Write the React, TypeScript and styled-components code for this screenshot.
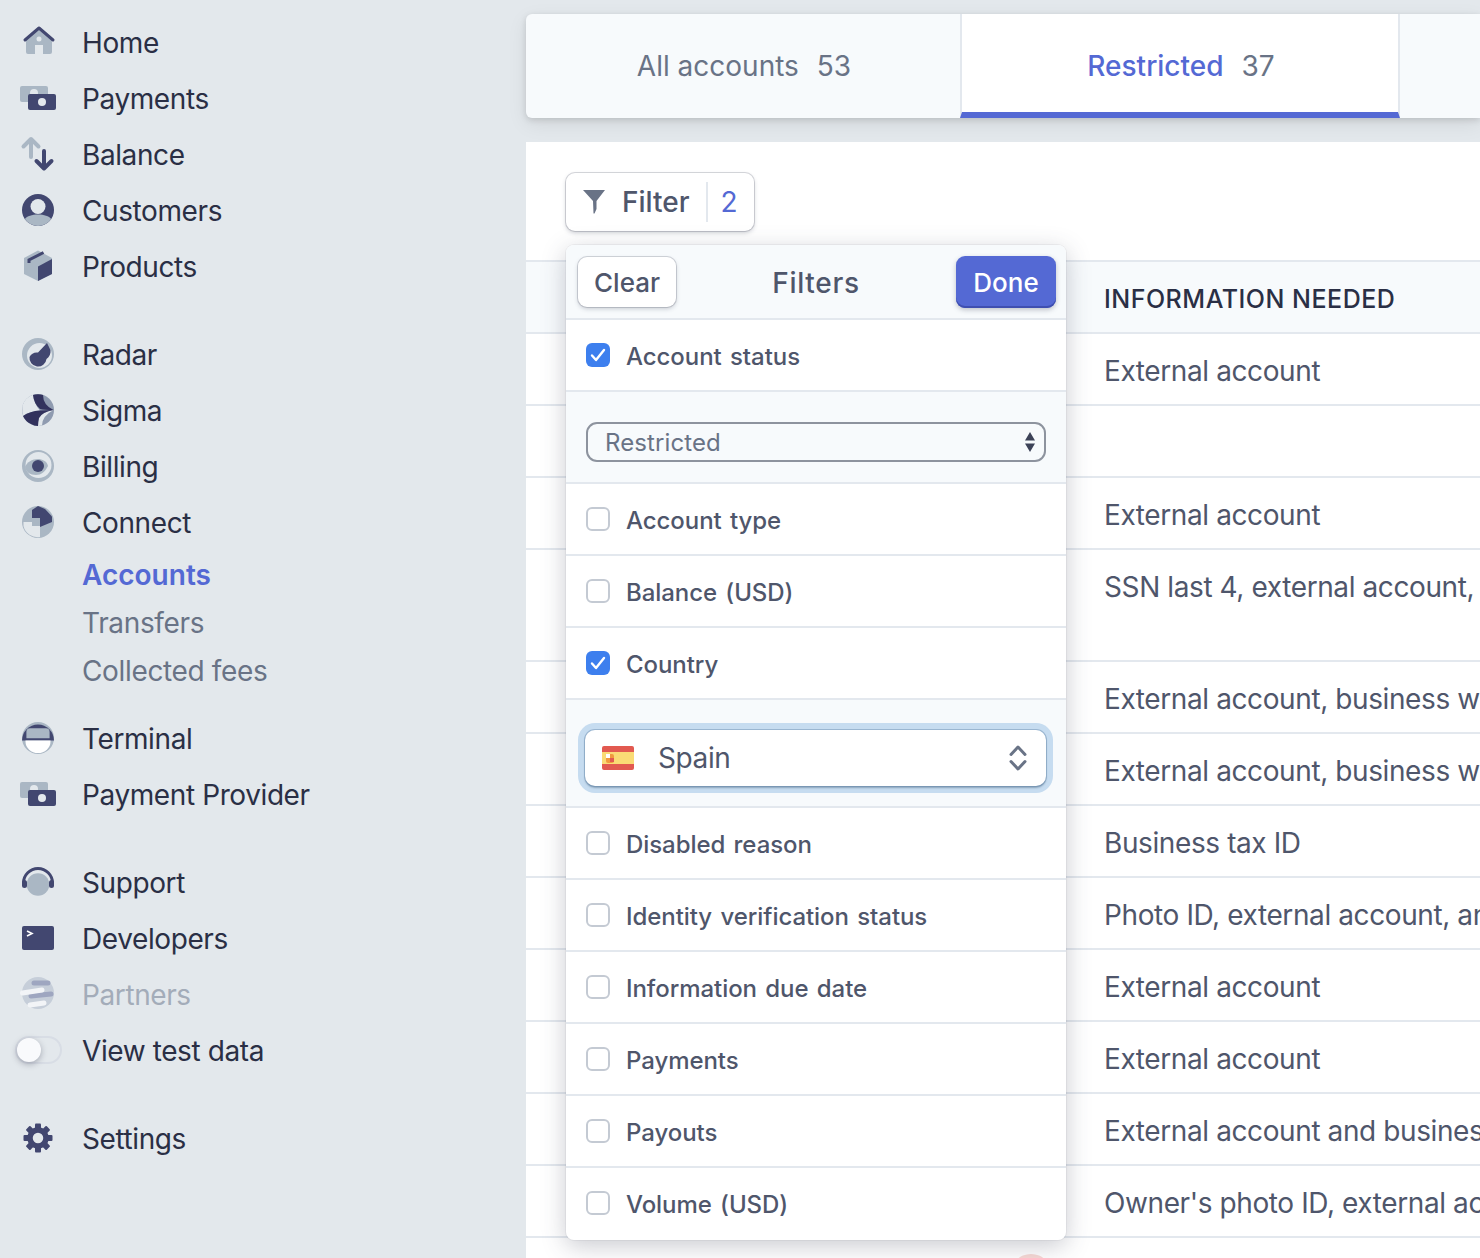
import * as React from 'react';
import styled, { createGlobalStyle } from 'styled-components';

const DARK = '#424770';
const LIGHT = '#aab7c4';
const BG = '#e3e8ec';
const ACCENT = '#5469d4';

const GlobalResetStyles = createGlobalStyle`
  * {
    margin: 0;
    padding: 0;
    box-sizing: border-box;
  }
  html, body {
    height: 100%;
    overflow: hidden;
    background: ${BG};
    font-family: Inter, "Liberation Sans", sans-serif;
    color: #2a2f45;
  }
`;

/* ---- sidebar icons, all on a 36x36 box ---- */

const Ico = ({ children }: { children: React.ReactNode }) => (
  <svg width="36" height="36" viewBox="0 0 36 36">{children}</svg>
);

const HomeIcon = () => (
  <Ico>
    <path d="M6 15 19 5l13 10v13a2 2 0 0 1-2 2h-7v-9h-8v9H8a2 2 0 0 1-2-2z" fill={LIGHT} />
    <circle cx="19" cy="15" r="2.5" fill={BG} />
    <path d="M5 16 19 4l14 12" fill="none" stroke={DARK} strokeWidth="3" strokeLinecap="round" strokeLinejoin="round" />
  </Ico>
);

const PaymentsIcon = () => (
  <Ico>
    <rect x="0" y="6" width="28" height="16" rx="2" fill={LIGHT} />
    <circle cx="14" cy="13" r="4" fill={BG} />
    <rect x="8" y="14" width="28" height="16" rx="2" fill={DARK} />
    <circle cx="22" cy="22" r="4" fill={BG} />
  </Ico>
);

const BalanceIcon = () => (
  <Ico>
    <path d="M11 21V3.5M3.5 10.5 11 3l7.5 7.5" fill="none" stroke={LIGHT} strokeWidth="4" strokeLinecap="round" strokeLinejoin="round" />
    <path d="M24 15v17M16.5 25l7.5 7.5 7.5-7.5" fill="none" stroke={DARK} strokeWidth="4" strokeLinecap="round" strokeLinejoin="round" />
  </Ico>
);

const CustomersIcon = () => (
  <Ico>
    <circle cx="18" cy="18" r="16" fill={DARK} />
    <path d="M4.8 27C7 24 12 22.5 18 22.5S29 24 31.2 27A16 16 0 0 1 4.8 27z" fill={LIGHT} />
    <circle cx="18" cy="14.5" r="7.5" fill={BG} />
  </Ico>
);

const ProductsIcon = () => (
  <Ico>
    <path d="M18 2.5 32 10v16l-14 7-14-7V10z" fill={LIGHT} />
    <path d="M18 18.5 32 11v15l-14 7z" fill={DARK} />
    <path d="M9 15v-3l14.5-7.5" fill="none" stroke={DARK} strokeWidth="3" />
  </Ico>
);

const RadarIcon = () => (
  <Ico>
    <circle cx="18" cy="18" r="16" fill={LIGHT} />
    <circle cx="19.5" cy="19.5" r="12.5" fill={BG} />
    <path d="M9.5 21a8.5 8.5 0 0 0 17 2c3-2 4.5-6 4-9l-3.500-7-9 9.500a8.500 8.500 0 0 0-8.500 4.500z" fill={DARK} />
  </Ico>
);

const SigmaIcon = () => (
  <Ico>
    <circle cx="18" cy="18" r="16" fill="#8f9bb0" />
    <path d="M13 2.800Q5 5.500 2.300 14 2 20 3 24 10 19 20 18.500 14 12 13 2.800z" fill={BG} />
    <path d="M33.500 18Q22 20 19 26 18 30 18 34l4-.5Q22 24 33.500 18z" fill={BG} />
    <path d="M13 3Q18 1.500 23 3 23 13 33.500 18 24 18 20 17 14 12 13 3z" fill="#32325d" />
    <path d="M3 24Q10 19 20 18.500L33.500 18Q22 20 19 26 18 30 18 34 14 34 11 32 5 29 3 24z" fill="#32325d" />
  </Ico>
);

const BillingIcon = () => (
  <Ico>
    <circle cx="18" cy="18" r="16" fill={LIGHT} />
    <circle cx="18.500" cy="17" r="13" fill={BG} />
    <path d="M5 19c2-5 7-8 13-8 4 0 9 2 10 7-3 6-7 9-12 9-6 0-10-3-11-8z" fill={LIGHT} />
    <circle cx="18" cy="18" r="6" fill={DARK} />
  </Ico>
);

const ConnectIcon = () => (
  <Ico>
    <circle cx="18" cy="18" r="16" fill={LIGHT} />
    <path d="M12 18V6l6-4 7 3 7 7.500V18l-12 5z" fill={DARK} />
    <rect x="12" y="14" width="8" height="8" fill={LIGHT} />
    <path d="M3.500 22a14.500 14.500 0 0 0 16.500 11V22H12v-4H3.500z" fill={BG} />
  </Ico>
);

const TerminalIcon = () => (
  <Ico>
    <circle cx="18" cy="18" r="16" fill={LIGHT} />
    <path d="M2 20.500a16 16 0 0 1 32 0z" fill={DARK} />
    <path d="M6.400 18.300V12q0-3.700 3.600-3.700h16q3.600 0 3.600 3.700v6.300z" fill={LIGHT} />
    <path d="M5.500 20.500h25v1a12.500 11.500 0 0 1-25 0z" fill="#fff" />
  </Ico>
);

const SupportIcon = () => (
  <Ico>
    <circle cx="18" cy="20.500" r="11.300" fill={LIGHT} />
    <path d="M3.500 19a14.500 14.500 0 0 1 29 0" fill="none" stroke={DARK} strokeWidth="3" />
    <rect x="2" y="16" width="5" height="8" rx="2.500" fill={DARK} />
    <rect x="29" y="16" width="5" height="8" rx="2.500" fill={DARK} />
  </Ico>
);

const DevelopersIcon = () => (
  <Ico>
    <rect x="2" y="6" width="32" height="24" rx="2" fill={DARK} />
    <path d="m7 11 5 2.500L7 16" fill="none" stroke="#fff" strokeWidth="1.600" />
  </Ico>
);

const PartnersIcon = () => (
  <Ico>
    <circle cx="18" cy="17" r="16" fill="#c6ced9" />
    <path d="M14 7h14M11 20l20-2" stroke="#9ea6c0" strokeWidth="5" strokeLinecap="round" fill="none" />
    <path d="M2.500 17 22 14M10 29l14-2" stroke="#f2f4f7" strokeWidth="5" strokeLinecap="round" fill="none" />
  </Ico>
);

const SettingsIcon = () => (
  <Ico>
    {[0, 45, 90, 135, 180, 225, 270, 315].map((deg) => (
      <rect key={deg} x="15" y="3.500" width="6" height="6" rx="1" fill={DARK} transform={`rotate(${deg} 18 18)`} />
    ))}
    <circle cx="18" cy="18" r="8" fill="none" stroke={DARK} strokeWidth="5.500" />
  </Ico>
);

/* ---- sidebar ---- */

const Sidebar = styled.nav`
  width: 526px;
  flex: none;
  padding: 14px 0 0 20px;
`;

const NavGroup = styled.div`
  margin-bottom: 32px;
`;

const NavRow = styled.div`
  height: 56px;
  display: flex;
  align-items: center;
  gap: 26px;
`;

const IconSlot = styled.span`
  width: 36px;
  height: 36px;
  flex: none;
  display: flex;
  align-items: center;
  justify-content: center;
`;

const NavLabel = styled.span<{ $muted?: boolean }>`
  padding-top: 1px;
  font-size: 28px;
  letter-spacing: -0.4px;
  color: ${(p) => (p.$muted ? '#a3acb9' : '#2a2f45')};
`;

const SubNav = styled.div`
  padding: 0 0 16px 62px;
`;

const SubLink = styled.div<{ $active?: boolean }>`
  height: 48px;
  display: flex;
  align-items: center;
  padding-top: 1px;
  font-size: 28px;
  letter-spacing: ${(p) => (p.$active ? 0 : -0.35)}px;
  font-weight: ${(p) => (p.$active ? 600 : 400)};
  color: ${(p) => (p.$active ? ACCENT : '#697386')};
`;

const Toggle = styled.span`
  width: 47px;
  height: 28px;
  flex: none;
  border: 2px solid #d8dde5;
  border-radius: 14px;
  position: relative;
`;

const ToggleKnob = styled.span`
  position: absolute;
  left: 0;
  top: 0;
  width: 24px;
  height: 24px;
  border-radius: 50%;
  background: #f9fafc;
  box-shadow: 0 2px 6px rgba(42, 47, 69, 0.35);
`;

const navGroups = [
  [
    { label: 'Home', icon: <HomeIcon /> },
    { label: 'Payments', icon: <PaymentsIcon /> },
    { label: 'Balance', icon: <BalanceIcon /> },
    { label: 'Customers', icon: <CustomersIcon /> },
    { label: 'Products', icon: <ProductsIcon /> },
  ],
];

/* ---- main area ---- */

const Page = styled.div`
  display: flex;
  height: 1258px;
  overflow: hidden;
`;

const Main = styled.main`
  flex: 1;
  min-width: 0;
  padding-top: 14px;
`;

const Tabs = styled.div`
  position: relative;
  display: flex;
  height: 104px;
  background: #f7fafc;
  border-radius: 6px 0 0 6px;
  box-shadow: 0 2px 6px rgba(0, 0, 0, 0.13), 0 6px 20px rgba(0, 0, 0, 0.08);
`;

const Tab = styled.div<{ $active?: boolean; $width: number }>`
  width: ${(p) => p.$width}px;
  flex: none;
  display: flex;
  align-items: center;
  justify-content: center;
  gap: 18px;
  padding: ${(p) => (p.$active ? 6 : 0)}px 0 0 2px;
  font-size: 28px;
  color: #697386;
  background: ${(p) => (p.$active ? '#fff' : 'transparent')};
  border-left: ${(p) => (p.$active ? '2px solid #e3e8ee' : 'none')};
  border-right: ${(p) => (p.$active ? '2px solid #e3e8ee' : 'none')};
  border-bottom: ${(p) => (p.$active ? `6px solid ${ACCENT}` : 'none')};
`;

const TabLabel = styled.span<{ $active?: boolean }>`
  color: ${(p) => (p.$active ? ACCENT : '#697386')};
  font-weight: ${(p) => (p.$active ? 500 : 400)};
`;

const Card = styled.section`
  position: relative;
  margin-top: 24px;
  height: 1200px;
  background: #fff;
  padding-top: 31px;
`;

const FilterButton = styled.div`
  margin-left: 40px;
  width: 188px;
  height: 58px;
  display: flex;
  align-items: center;
  padding-left: 17px;
  background: #fff;
  border-radius: 9px;
  box-shadow: 0 0 0 1px rgba(60, 66, 87, 0.2), 0 2px 4px rgba(60, 66, 87, 0.25);
  font-size: 28px;
  font-weight: 500;
  color: #4f566b;
`;

const FilterText = styled.span`
  margin-left: 17px;
`;

const FilterDivider = styled.span`
  width: 2px;
  height: 40px;
  margin: 0 13px 0 16px;
  background: #e3e8ee;
`;

const FilterCount = styled.span`
  color: ${ACCENT};
  font-weight: 400;
`;

const Table = styled.div`
  margin-top: 29px;
`;

const HeadRow = styled.div`
  height: 74px;
  padding: 4px 0 0 578px;
  display: flex;
  align-items: center;
  background: #f7fafc;
  border-top: 2px solid #e3e8ee;
  border-bottom: 2px solid #e3e8ee;
  font-size: 25px;
  font-weight: 500;
  letter-spacing: 0.5px;
  color: #2a2f45;
  white-space: nowrap;
`;

const BodyRow = styled.div<{ $tall?: boolean }>`
  height: ${(p) => (p.$tall ? 112 : 72)}px;
  padding: 20px 0 0 578px;
  border-bottom: 2px solid #e3e8ee;
  font-size: 28px;
  letter-spacing: -0.4px;
  line-height: 34px;
  color: #4f566b;
  white-space: nowrap;
`;

const LastRow = styled.div`
  padding: 16px 0 0 484px;
`;

const StatusDot = styled.div`
  width: 42px;
  height: 42px;
  border-radius: 50%;
  background: #f8d9d5;
`;

const tableRows = [
  { text: 'External account' },
  { text: '' },
  { text: 'External account' },
  { text: 'SSN last 4, external account, business', tall: true },
  { text: 'External account, business website' },
  { text: 'External account, business website' },
  { text: 'Business tax ID' },
  { text: 'Photo ID, external account, and more' },
  { text: 'External account' },
  { text: 'External account' },
  { text: 'External account and business details' },
  { text: "Owner's photo ID, external account" },
];

/* ---- filter popover ---- */

const Popover = styled.div`
  position: absolute;
  left: 40px;
  top: 103px;
  width: 500px;
  background: #fff;
  border-radius: 8px;
  overflow: hidden;
  box-shadow: 0 0 0 1px rgba(60, 66, 87, 0.06), 0 6px 24px rgba(60, 66, 87, 0.28);
`;

const PopoverHead = styled.div`
  height: 75px;
  display: flex;
  align-items: center;
  justify-content: space-between;
  padding: 0 10px 0 12px;
  background: #f7fafc;
  border-bottom: 2px solid #e3e8ee;
`;

const PopoverTitle = styled.span`
  padding-top: 3px;
  font-size: 28px;
  font-weight: 500;
  letter-spacing: 0.7px;
  color: #4f566b;
`;

const HeadButton = styled.div<{ $primary?: boolean }>`
  width: ${(p) => (p.$primary ? 100 : 98)}px;
  height: ${(p) => (p.$primary ? 52 : 50)}px;
  display: flex;
  align-items: center;
  justify-content: center;
  padding-top: 2px;
  border-radius: 9px;
  font-size: 26px;
  font-weight: 500;
  color: ${(p) => (p.$primary ? '#fff' : '#4f566b')};
  background: ${(p) => (p.$primary ? ACCENT : '#fff')};
  box-shadow: ${(p) =>
    p.$primary
      ? 'inset 0 -2px 0 #3f4fb0, 0 2px 5px rgba(60, 66, 87, 0.3)'
      : '0 0 0 1px rgba(60, 66, 87, 0.2), 0 2px 4px rgba(60, 66, 87, 0.25)'};
`;

const FilterRow = styled.div`
  height: 72px;
  display: flex;
  align-items: center;
  gap: 16px;
  padding-left: 20px;
  border-bottom: 2px solid #e3e8ee;
  font-size: 24px;
  font-weight: 500;
  letter-spacing: -0.06px;
  word-spacing: 2px;
  color: #4f566b;

  &:last-child {
    border-bottom-color: transparent;
  }
`;

const FilterName = styled.span`
  padding-top: 2px;
`;

const Checkbox = styled.span<{ $checked?: boolean }>`
  width: 24px;
  height: 24px;
  flex: none;
  display: flex;
  align-items: center;
  justify-content: center;
  border-radius: 6px;
  background: ${(p) => (p.$checked ? '#3d7fee' : '#fff')};
  border: ${(p) => (p.$checked ? 'none' : '2px solid #c4cad3')};
`;

const SubPanel = styled.div<{ $height: number }>`
  height: ${(p) => p.$height}px;
  display: flex;
  align-items: center;
  background: #f7fafc;
  border-bottom: 2px solid #e3e8ee;
  padding: 10px 20px 0;
`;

const NativeSelect = styled.div`
  width: 460px;
  height: 40px;
  display: flex;
  align-items: center;
  justify-content: space-between;
  padding: 0 8px 0 17px;
  border: 2px solid #8d939e;
  border-radius: 11px;
  font-size: 24px;
  letter-spacing: 0.1px;
  color: #697386;
`;

const CountrySelect = styled.div`
  width: 462px;
  height: 56px;
  margin-left: -1px;
  display: flex;
  align-items: center;
  justify-content: space-between;
  padding: 0 19px 0 17px;
  background: #fff;
  border-radius: 10px;
  box-shadow: 0 0 0 1px rgba(100, 135, 170, 0.45), 0 2px 2px rgba(60, 90, 120, 0.45), 0 0 0 7px #c6dcf0;
  font-size: 28px;
  letter-spacing: -0.4px;
  color: #4f566b;
`;

const CountryName = styled.span`
  display: flex;
  align-items: center;
  gap: 24px;
`;

const Tick = () => (
  <svg width="16" height="14" viewBox="0 0 16 14">
    <path d="M2 7.500 6 12l8-10" fill="none" stroke="#fff" strokeWidth="2.400" strokeLinecap="round" strokeLinejoin="round" />
  </svg>
);

const FunnelIcon = () => (
  <svg width="22" height="24" viewBox="0 0 22 24">
    <path d="M0 0h22l-8.500 11v8l-2 4.500h-1l-.5-12.500z" fill="#697386" />
  </svg>
);

const UpDownArrows = () => (
  <svg width="12" height="24" viewBox="0 0 12 24">
    <path d="M6 2l5 8.500H1zM6 22l5-8.500H1z" fill="#3c4257" />
  </svg>
);

const ChevronsIcon = () => (
  <svg width="18" height="26" viewBox="0 0 18 26">
    <path d="M2 9.500 9 2l7 7.500M2 16.500 9 24l7-7.500" fill="none" stroke="#697386" strokeWidth="3" strokeLinecap="round" strokeLinejoin="round" />
  </svg>
);

const SpainFlag = () => (
  <svg width="32" height="24" viewBox="0 0 32 24">
    <rect width="32" height="24" rx="2" fill="#e25950" />
    <rect y="6" width="32" height="12" fill="#fadb75" />
    <rect x="4" y="8" width="8" height="9" rx="2" fill="#f19a3e" />
    <rect x="4" y="8" width="4" height="4" fill="#fff" />
    <rect x="8" y="12" width="4" height="4" fill="#e25950" />
  </svg>
);

const FilterOption = ({ label, checked }: { label: string; checked?: boolean }) => (
  <FilterRow>
    <Checkbox $checked={checked}>{checked && <Tick />}</Checkbox>
    <FilterName>{label}</FilterName>
  </FilterRow>
);

export default function App() {
  return (
    <>
      <GlobalResetStyles />
      <Page>
        <Sidebar>
          {navGroups.map((group) => (
            <NavGroup key={group[0].label}>
              {group.map((item) => (
                <NavRow key={item.label}>
                  <IconSlot>{item.icon}</IconSlot>
                  <NavLabel>{item.label}</NavLabel>
                </NavRow>
              ))}
            </NavGroup>
          ))}
          <div>
            <NavRow><IconSlot><RadarIcon /></IconSlot><NavLabel>Radar</NavLabel></NavRow>
            <NavRow><IconSlot><SigmaIcon /></IconSlot><NavLabel>Sigma</NavLabel></NavRow>
            <NavRow><IconSlot><BillingIcon /></IconSlot><NavLabel>Billing</NavLabel></NavRow>
            <NavRow><IconSlot><ConnectIcon /></IconSlot><NavLabel>Connect</NavLabel></NavRow>
          </div>
          <SubNav>
            <SubLink $active>Accounts</SubLink>
            <SubLink>Transfers</SubLink>
            <SubLink>Collected fees</SubLink>
          </SubNav>
          <NavGroup>
            <NavRow><IconSlot><TerminalIcon /></IconSlot><NavLabel>Terminal</NavLabel></NavRow>
            <NavRow><IconSlot><PaymentsIcon /></IconSlot><NavLabel>Payment Provider</NavLabel></NavRow>
          </NavGroup>
          <NavGroup>
            <NavRow><IconSlot><SupportIcon /></IconSlot><NavLabel>Support</NavLabel></NavRow>
            <NavRow><IconSlot><DevelopersIcon /></IconSlot><NavLabel>Developers</NavLabel></NavRow>
            <NavRow><IconSlot><PartnersIcon /></IconSlot><NavLabel $muted>Partners</NavLabel></NavRow>
            <NavRow>
              <IconSlot><Toggle><ToggleKnob /></Toggle></IconSlot>
              <NavLabel>View test data</NavLabel>
            </NavRow>
          </NavGroup>
          <NavRow><IconSlot><SettingsIcon /></IconSlot><NavLabel>Settings</NavLabel></NavRow>
        </Sidebar>

        <Main>
          <Tabs>
            <Tab $width={434}><TabLabel>All accounts</TabLabel><span>53</span></Tab>
            <Tab $width={440} $active><TabLabel $active>Restricted</TabLabel><span>37</span></Tab>
          </Tabs>
          <Card>
            <FilterButton>
              <FunnelIcon />
              <FilterText>Filter</FilterText>
              <FilterDivider />
              <FilterCount>2</FilterCount>
            </FilterButton>
            <Table>
              <HeadRow>INFORMATION NEEDED</HeadRow>
              {tableRows.map((row, i) => (
                <BodyRow key={i} $tall={row.tall}>{row.text}</BodyRow>
              ))}
              <LastRow><StatusDot /></LastRow>
            </Table>
            <Popover>
              <PopoverHead>
                <HeadButton>Clear</HeadButton>
                <PopoverTitle>Filters</PopoverTitle>
                <HeadButton $primary>Done</HeadButton>
              </PopoverHead>
              <FilterOption label="Account status" checked />
              <SubPanel $height={92}>
                <NativeSelect>
                  Restricted
                  <UpDownArrows />
                </NativeSelect>
              </SubPanel>
              <FilterOption label="Account type" />
              <FilterOption label="Balance (USD)" />
              <FilterOption label="Country" checked />
              <SubPanel $height={108}>
                <CountrySelect>
                  <CountryName><SpainFlag />Spain</CountryName>
                  <ChevronsIcon />
                </CountrySelect>
              </SubPanel>
              <FilterOption label="Disabled reason" />
              <FilterOption label="Identity verification status" />
              <FilterOption label="Information due date" />
              <FilterOption label="Payments" />
              <FilterOption label="Payouts" />
              <FilterOption label="Volume (USD)" />
            </Popover>
          </Card>
        </Main>
      </Page>
    </>
  );
}
